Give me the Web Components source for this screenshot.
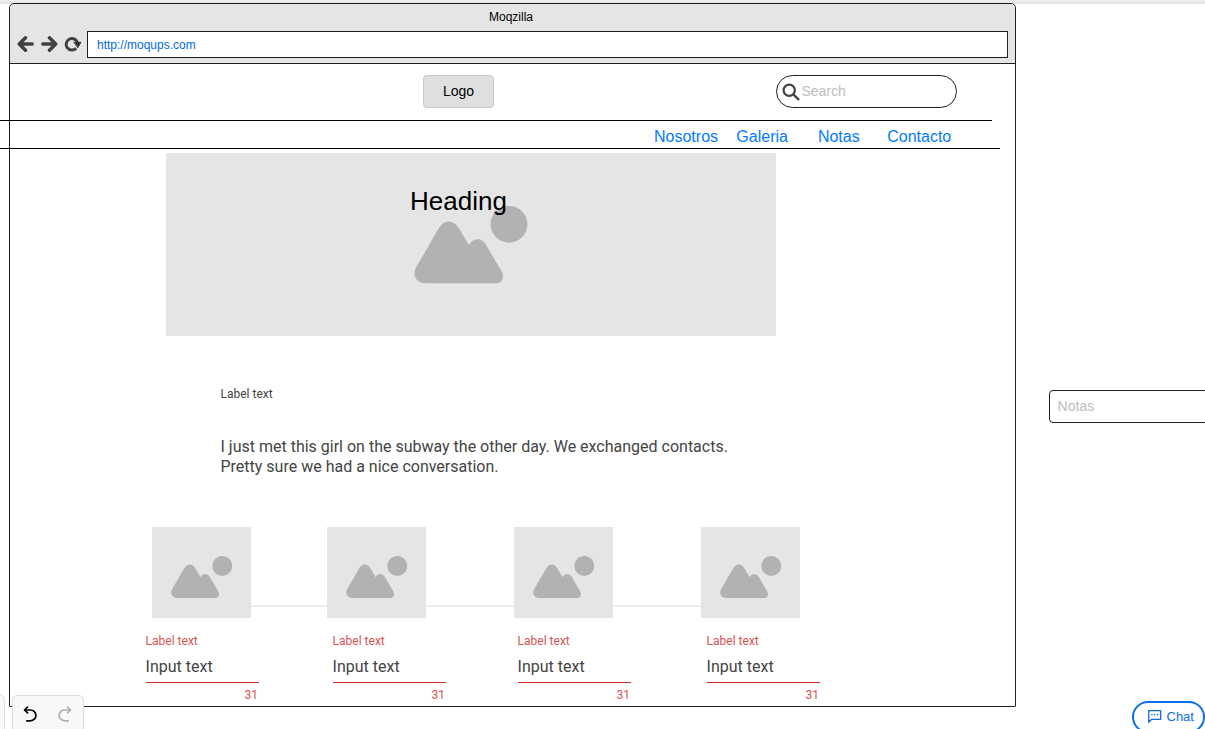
<!DOCTYPE html>
<html lang="es">
<head>
<meta charset="utf-8">
<title>Moqzilla wireframe</title>
<style>
html,body{margin:0;height:729px;overflow:hidden;background:#fff;font-family:"Liberation Sans",Arial,sans-serif}
</style>
</head>
<body>
<mock-canvas></mock-canvas>
<script>
const define = (name, html) => {
  const template = document.createElement('template');
  template.innerHTML = html;
  customElements.define(name, class extends HTMLElement {
    constructor() {
      super();
      this.attachShadow({mode: 'open'}).append(template.content.cloneNode(true));
    }
  });
};

define('image-placeholder', `
<style>
:host{display:grid;place-items:start;background:#e5e5e5;box-sizing:border-box;overflow:hidden}
svg{display:block;grid-area:1/1;width:var(--w,114px);height:var(--h,78px);margin:var(--at,53px 0 0 248px)}
.over{grid-area:1/1;z-index:1}
</style>
<svg viewBox="0 0 114 78" preserveAspectRatio="none" fill="#b2b2b2"><path d="M11.500 77.300C2 77.300-2 69 2 61.500L24.300 23C30 13.200 39.500 13.200 45 22.500L55 39C58.500 32 67 31 71.500 38L87.500 65C91 71.500 88 77.300 82 77.300Z"/><circle cx="95" cy="18.300" r="18.400"/></svg>
<div class="over"><slot></slot></div>`);

define('browser-chrome', `
<style>
:host{display:flex;flex-direction:column;height:59px;background:#e5e5e5;border-bottom:1px solid #1f1f1f;border-radius:5px 5px 0 0}
.title{height:27px;line-height:27px;font-size:12px;text-align:center;color:#000;padding-right:3px}
.bar{display:flex;align-items:center;height:27px;padding:0 7px}
.tools{width:70px;height:27px;flex:none}
.url{flex:1;height:25px;border:1px solid #1f1f1f;background:#fff;color:#006be0;font-size:12px;line-height:26px;padding-left:9px}
svg{display:block}
</style>
<div class="title"><slot></slot></div>
<div class="bar">
<svg class="tools" viewBox="17 31 70 27" fill="none" stroke="#404040" stroke-width="3.500" stroke-linecap="round" stroke-linejoin="round"><path d="M25.500 37.800 19.300 44l6.200 6.200M20 44h12.200M49.500 37.800 55.700 44l-6.200 6.200M55 44H42.800"/><path d="M76.200 48.200a5.800 5.800 0 1 1 1.400-5.200" stroke-width="2.900" stroke-linecap="butt"/><path d="M74.200 42.200h6.800l-3 5.400z" fill="#303030" stroke="#303030" stroke-width=".8"/></svg>
<div class="url">http://moqups.com</div></div>`);

define('site-header', `
<style>
:host{display:block}
.row{display:flex;height:56px;align-items:flex-start;box-sizing:border-box;padding:11px 58px 0 413px;justify-content:space-between}
.logo{width:69px;height:31px;border:1px solid #c9c9c9;border-radius:4px;background:#dfdfdf;font-size:14px;line-height:31px;text-align:center}
.search{width:179px;height:31px;border:1px solid #1f1f1f;border-radius:17px;display:flex;align-items:center;color:#bdbdbd;font-size:14px}
.search svg{width:18px;height:18px;margin:0 1.500px 0 5px}
.search span{padding-bottom:2px}
.rule{height:1px;background:#000;margin-left:-10px;width:991.500px}
.rule.b{width:1000px}
nav{height:27px;display:flex;padding-left:644px;font-size:16px;line-height:31px;color:#007aff}
a:nth-child(2){margin-left:18.300px}a:nth-child(3){margin-left:30px}a:nth-child(4){margin-left:27.500px}
</style>
<div class="row"><div class="logo">Logo</div><div class="search"><svg viewBox="0 0 18 18" fill="none" stroke="#404040"><circle cx="7.200" cy="7.200" r="5.600" stroke-width="2.200"/><path d="m11.300 11.300 5.700 5.700" stroke-width="2.400"/></svg><span>Search</span></div></div>
<div class="rule"></div>
<nav><a>Nosotros</a><a>Galeria</a><a>Notas</a><a>Contacto</a></nav>
<div class="rule b"></div>`);

define('text-field', `
<style>
:host{display:block;width:113px;font-family:Roboto,sans-serif;color:#444}
.l,.n{font-size:12px;line-height:16px;color:#d95252}
.l,.v{text-indent:-.4px}
.v{font-size:16px;line-height:20px;margin-top:8px;height:25px;border-bottom:1px solid #d12d2d}
.n{text-align:right;padding-right:1px;margin-top:4px}
</style>
<div class="l">Label text</div><div class="v"><slot></slot></div><div class="n">31</div>`);

define('page-content', `
<style>
:host{display:block;font-family:Roboto,sans-serif;color:#444}
.hero{width:610px;height:183px;margin:4px 0 0 156px}
h1{font:400 26px/30px "Liberation Sans",Arial,sans-serif;color:#000;margin:33px 0 0 244px}
.label{font-size:12px;line-height:16px;margin:50px 0 0 210.500px}
p{font-size:16px;line-height:20px;margin:35px 0 0 210.500px}
.thumbs{display:flex;margin:50px 0 0 142px;height:91px}
.thumbs image-placeholder{width:99px;height:91px;flex:none;--w:61.500px;--h:42.300px;--at:29px 0 0 18.700px}
.link{width:76px;height:1px;flex:none;margin-top:78px;background:#e8e8e8;border-top:1px solid #f2f2f2}
.link.w{width:88px}
.fields{display:flex;margin:15px 0 0 136px}
text-field:nth-child(2){margin-left:74px}text-field:nth-child(3){margin-left:72px}text-field:nth-child(4){margin-left:76px}
</style>
<image-placeholder class="hero"><h1>Heading</h1></image-placeholder>
<div class="label">Label text</div>
<p>I just met this girl on the subway the other day. We exchanged contacts.<br>Pretty sure we had a nice conversation.</p>
<div class="thumbs"><image-placeholder></image-placeholder><div class="link"></div><image-placeholder></image-placeholder><div class="link w"></div><image-placeholder></image-placeholder><div class="link w"></div><image-placeholder></image-placeholder></div>
<div class="fields"><text-field>Input text</text-field><text-field>Input text</text-field><text-field>Input text</text-field><text-field>Input text</text-field></div>`);

define('history-tools', `
<style>
:host{position:absolute;left:0;bottom:0;display:flex;gap:7px;height:34px}
div{box-sizing:border-box;height:40px;background:#f8f8f8;border:1px solid #ddd;border-radius:5px}
.a{width:5px;border-left:0;border-radius:0 5px 5px 0}.b{width:72px}
svg{display:block}
</style>
<div class="a"></div><div class="b"><svg width="70" height="33" viewBox="13 696 70 33" fill="none" stroke-width="1.700"><g stroke="#000"><path d="M24.500 710h6a5.300 5.300 0 0 1 0 10.800H26.200"/><path d="m28 706.700-3.300 3.300 3.300 3.300"/></g><g stroke="#b0b0b0"><path d="M70.500 710h-6a5.300 5.300 0 0 0 0 10.800h4.300"/><path d="m67 706.700 3.300 3.300-3.300 3.300"/></g></svg></div>`);

define('chat-button', `
<style>
:host{position:absolute;right:0;top:701px;box-sizing:border-box;width:73px;height:32px;border:2px solid #0a6fe8;border-radius:16px;background:#fff;display:flex;align-items:center;padding:0 0 2px 13px;gap:4.500px;color:#0a6fe8;font-size:13px}
svg{display:block;width:15px;height:15px}
</style>
<svg viewBox="0 0 15 15" fill="none" stroke="#0a6fe8" stroke-width="1.300" stroke-linejoin="round"><path d="M1.700 1.700h12v8.600H4.600L1.700 13.200z"/><path d="M4.200 5.700h1.500M7 5.700h1.500M9.800 5.700h1.500"/></svg><span><slot></slot></span>`);

define('mock-canvas', `
<style>
:host{display:grid;grid-template-rows:3px 726px;grid-template-columns:1049px 156px;width:1205px;height:729px;position:relative;overflow:hidden;background:#fff}
.strip{grid-column:1/3;background:#ededed;height:2px;border-bottom:2px solid #e6e6e6}
.frame{margin-left:9px;width:1005px;height:702px;border:1px solid #1f1f1f;border-radius:5px 5px 1px 1px;background:#fff;position:relative}
.notas{margin-top:387px;width:180px;height:31px;border:1px solid #1f1f1f;border-radius:4px;color:#bdbdbd;font-size:14px;line-height:31px;text-indent:7.600px}
</style>
<div class="strip"></div>
<div class="frame"><browser-chrome>Moqzilla</browser-chrome><site-header></site-header><page-content></page-content></div>
<div class="notas">Notas</div>
<history-tools></history-tools><chat-button>Chat</chat-button>`);
</script>
</body>
</html>
